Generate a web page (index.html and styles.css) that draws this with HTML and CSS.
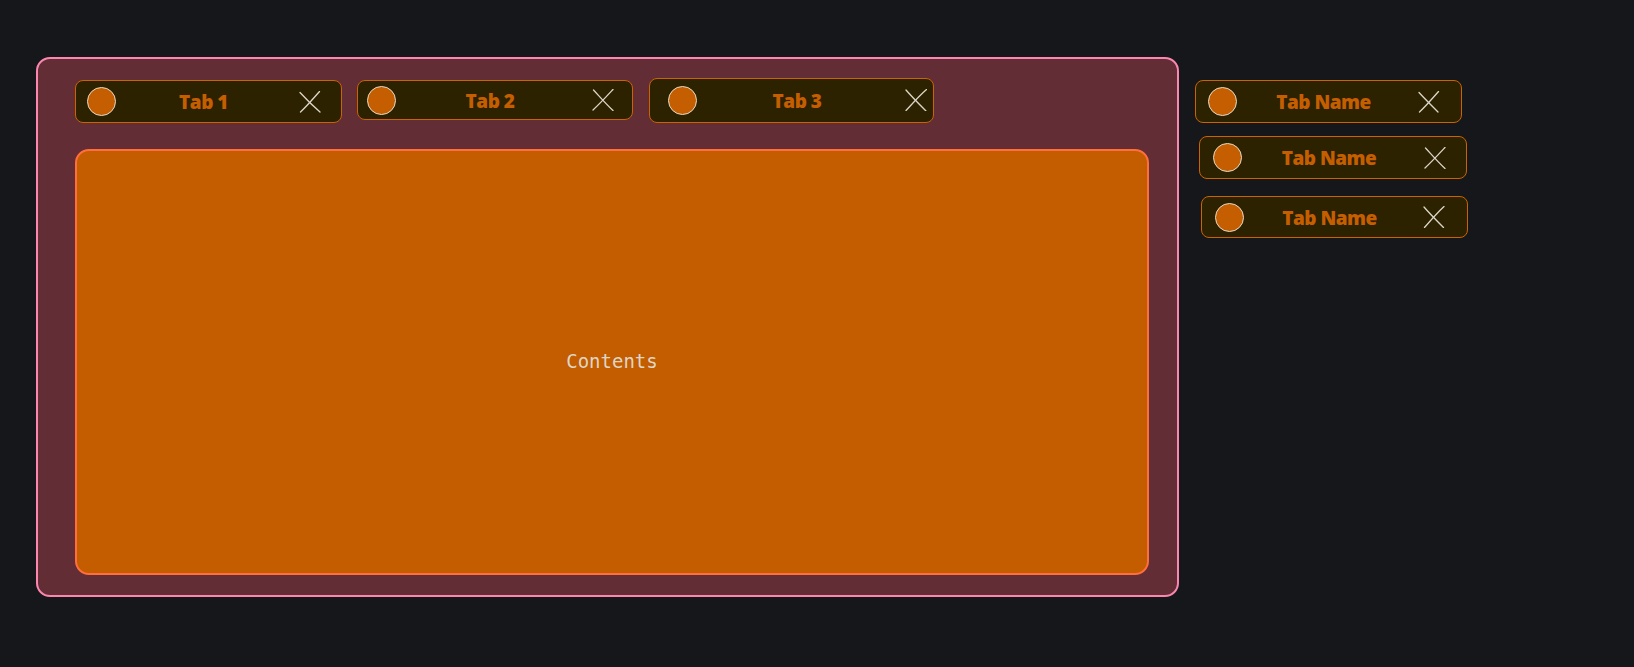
FILE: index.html
```html
<!DOCTYPE html>
<html lang="en">
<head>
<meta charset="utf-8">
<title>Tabs sketch</title>
<link rel="stylesheet" href="styles.css">
</head>
<body>
  <div class="frame">
    <div class="tab-row">
      <div class="tab tab-1">
        <span class="dot"></span>
        <span class="label">Tab 1</span>
        <svg class="close" viewBox="0 0 22 22"><path d="M1 1.5 C7 8 14 15 21 21"/><path d="M20.5 0.5 C14 8 8 15 1.5 21"/></svg>
      </div>
      <div class="tab tab-2">
        <span class="dot"></span>
        <span class="label">Tab 2</span>
        <svg class="close" viewBox="0 0 22 22"><path d="M1.5 1 C8 8 14 15 21 21.5"/><path d="M21 0.5 C14 8 8 14.5 1 21"/></svg>
      </div>
      <div class="tab tab-3">
        <span class="dot"></span>
        <span class="label">Tab 3</span>
        <svg class="close" viewBox="0 0 22 22"><path d="M1 1 C7 8 14 15 21 22"/><path d="M21.5 0.5 C14 7 8 14 1 21.5"/></svg>
      </div>
    </div>
    <div class="content">Contents</div>
  </div>
  <div class="side">
    <div class="tab side-1">
      <span class="dot"></span>
      <span class="label">Tab Name</span>
      <svg class="close" viewBox="0 0 22 22"><path d="M1 1.5 C7 8 14 15 20 21"/><path d="M20.5 0.5 C14 8 8 15 1.5 21"/></svg>
    </div>
    <div class="tab side-2">
      <span class="dot"></span>
      <span class="label">Tab Name</span>
      <svg class="close" viewBox="0 0 22 22"><path d="M1.5 1 C8 8 14 15 21 21.5"/><path d="M21 0.5 C14 8 8 14.5 1 21"/></svg>
    </div>
    <div class="tab side-3">
      <span class="dot"></span>
      <span class="label">Tab Name</span>
      <svg class="close" viewBox="0 0 22 22"><path d="M1 1 C7 8 14 15 20.5 21.5"/><path d="M21 0.5 C14 7 8 14 1.5 21.5"/></svg>
    </div>
  </div>
</body>
</html>
```

FILE: styles.css
```css
* { box-sizing: border-box; }

html, body {
  margin: 0;
  background: #16171a;
}

body {
  padding: 57px 0 0 36px;
  display: flex;
  align-items: flex-start;
  gap: 16px;
  font-family: "Open Sans", Lato, sans-serif;
  min-height: 667px;
}

.frame {
  width: 1143px;
  height: 540px;
  background: #632d36;
  border: 2px solid #fb86b0;
  border-radius: 14px;
  padding: 18px 28px 20px 37px;
  display: flex;
  flex-direction: column;
  gap: 26px;
}

.tab-row {
  height: 46px;
  display: flex;
  align-items: center;
  gap: 15px;
}

.tab {
  display: grid;
  grid-template-columns: 1fr auto 1fr;
  align-items: center;
  background: #2c2200;
  border: 1.5px solid #cb6300;
  border-radius: 8px;
}

.dot {
  justify-self: start;
  width: 29px;
  height: 29px;
  border-radius: 50%;
  background: #c55e00;
  border: 1.5px solid #e2dccd;
}

.label {
  color: #c55e00;
  font-weight: 800;
  font-size: 19px;
  line-height: 1;
  white-space: nowrap;
  letter-spacing: -0.5px;
  padding-top: 2px;
}

.close {
  justify-self: end;
  width: 22px;
  height: 22px;
  fill: none;
  stroke: #dcd6c8;
  stroke-width: 1.3;
  stroke-linecap: round;
}

.tab-1 { width: 267px; height: 43px; padding: 0 20.5px 0 10.5px; margin-top: 3px; }
.tab-2 { width: 276px; height: 40px; padding: 0 18.5px 0 8.5px; }
.tab-3 { width: 285px; height: 45px; padding: 0 6.5px 0 17.5px; margin-left: 1px; }

.content {
  flex: 1;
  background: #c45c00;
  border: 2px solid #ff6e3c;
  border-radius: 14px;
  display: flex;
  align-items: center;
  justify-content: center;
  color: #ddd6c6;
  font-family: "DejaVu Sans Mono", "Liberation Mono", monospace;
  font-size: 19px;
  padding-bottom: 3px;
}

.side {
  display: flex;
  flex-direction: column;
  margin-top: 23px;
}

.side-1 { width: 267px; height: 43px; padding: 0 21.5px 0 11.5px; }
.side-2 { width: 268px; height: 43px; padding: 0 20.5px 0 12.5px; margin: 13px 0 0 4px; }
.side-3 { width: 267px; height: 42px; padding: 0 22.5px 0 12.5px; margin: 17px 0 0 6px; }
```
